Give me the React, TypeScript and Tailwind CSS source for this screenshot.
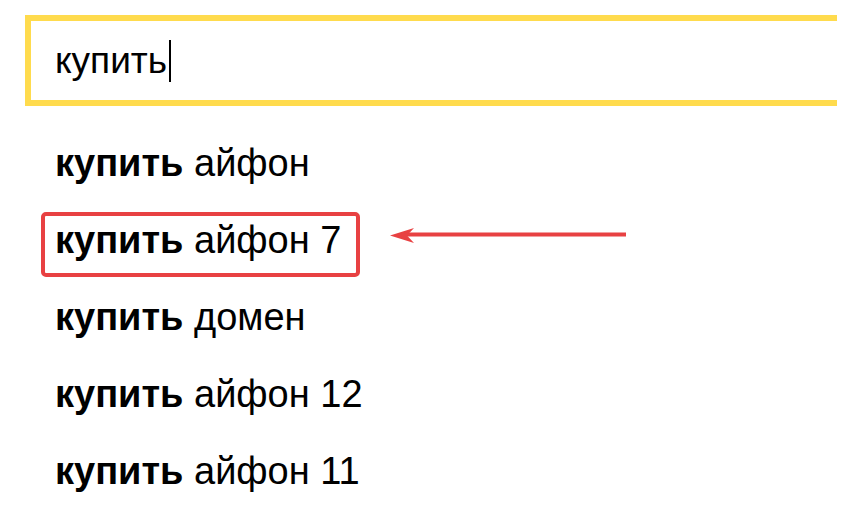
import React from "react";

const rows = [" айфон", " айфон 7", " домен", " айфон 12", " айфон 11"];

export default function App() {
  return (
    <div
      className="relative w-[860px] h-[516px] overflow-hidden bg-white text-black"
      style={{ fontFamily: '"Liberation Sans", Arial, sans-serif' }}
    >
      <div className="pt-[15px] pl-[25px] w-[837px]">
        <div className="h-[91px] border-y-[6px] border-l-[6px] border-[#ffdb4d] flex items-center pl-[24px]">
          <span className="text-[37px] leading-none text-black">купить</span>
          <span className="w-[2px] h-[42px] bg-black ml-[2px]" />
        </div>
      </div>
      <ul className="mt-[19px] pl-[55px]">
        {rows.map((r, i) => (
          <li key={i} className="relative text-[38px] leading-[77px] whitespace-pre">
            <b className="font-bold">купить</b>
            <span>{r}</span>
            {i === 1 && (
              <span className="absolute left-[-14px] top-[10px] w-[319px] h-[65px] border-[4px] border-[#e84142] rounded-[5px]" />
            )}
          </li>
        ))}
      </ul>
      <svg className="absolute left-[385px] top-[222px]" width="250" height="28" viewBox="0 0 250 28">
        <line x1="20" y1="12.5" x2="241" y2="12.5" stroke="#e84142" strokeWidth="4" />
        <path d="M5 13.5 L29 6 L22 13.5 L29 21 Z" fill="#e84142" />
      </svg>
    </div>
  );
}
